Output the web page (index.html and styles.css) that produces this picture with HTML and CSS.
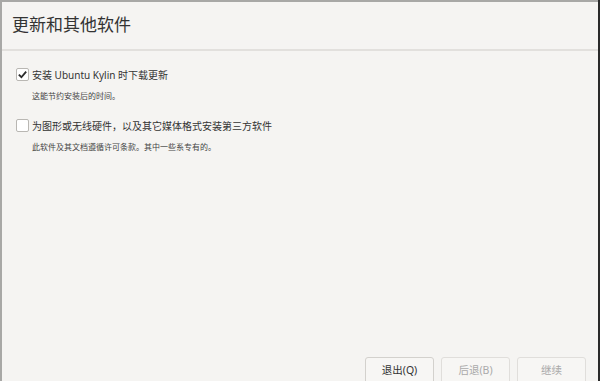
FILE: index.html
```html
<!DOCTYPE html>
<html lang="zh-CN">
<head>
  <meta charset="UTF-8" />
  <title>更新和其他软件</title>
  <link rel="stylesheet" href="styles.css">
</head>
<body>
  <div class="window">
    <header class="header">
      <h1>更新和其他软件</h1>
    </header>

    <main class="content">
      <div class="option">
        <label class="check-row">
          <span class="box checked">
            <svg viewBox="0 0 12 12" width="11" height="11"><path d="M2 6.2 L4.8 9 L10 2.8" fill="none" stroke="#2b2b2b" stroke-width="2"/></svg>
          </span>
          <span class="label">安装 Ubuntu Kylin 时下载更新</span>
        </label>
        <p class="hint">这能节约安装后的时间。</p>
      </div>

      <div class="option">
        <label class="check-row">
          <span class="box"></span>
          <span class="label">为图形或无线硬件，以及其它媒体格式安装第三方软件</span>
        </label>
        <p class="hint">此软件及其文档遵循许可条款。其中一些系专有的。</p>
      </div>
    </main>

    <footer class="actions">
      <button class="btn">退出(Q)</button>
      <button class="btn disabled">后退(B)</button>
      <button class="btn disabled">继续</button>
    </footer>
  </div>
</body>
</html>
```

FILE: styles.css
```css
:root {
  --bg: #f5f4f2;
  --text: #3c3c3c;
  --line: #e2e0dd;
  --font: 'Noto Sans', 'Noto Sans CJK SC', sans-serif;
}

html, body {
  margin: 0;
  height: 100%;
}

body {
  font-family: var(--font);
  background: #2a2a2a;
  color: var(--text);
}

.window {
  box-sizing: border-box;
  width: 598px;
  height: 381px;
  background: var(--bg);
  border-top: 2px solid #a8a8a6;
  border-left: 2px solid #a8a8a6;
  display: flex;
  flex-direction: column;
}

.header {
  height: 47px;
  border-bottom: 2px solid var(--line);
  display: flex;
  align-items: center;
  padding-left: 10px;
}

.header h1 {
  margin: 0;
  font-size: 17px;
  font-weight: 400;
  color: #333;
  padding-bottom: 4px;
}

.content {
  flex: 1;
  padding: 14px 0 0 14px;
}

.option {
  margin-bottom: 15px;
}

.check-row {
  display: flex;
  align-items: center;
  gap: 3px;
  height: 18px;
}

.box {
  box-sizing: border-box;
  width: 13px;
  height: 13px;
  border: 1px solid #b9b7b3;
  border-radius: 2px;
  background: #fff;
  display: flex;
  align-items: center;
  justify-content: center;
}

.label {
  font-size: 10px;
  color: #333;
}

.hint {
  margin: 7px 0 0 16px;
  font-size: 8px;
  color: #444;
}

.actions {
  display: flex;
  justify-content: flex-end;
  gap: 7px;
  padding-right: 12px;
  height: 24px;
}

.btn {
  width: 69px;
  height: 30px;
  border: 1px solid #d3d1cd;
  border-radius: 3px;
  background: #f7f6f4;
  font-family: var(--font);
  font-size: 10.5px;
  color: #333;
  padding-bottom: 6px;
}

.btn.disabled {
  color: #aaa;
  border-color: #e0dedb;
}
```
